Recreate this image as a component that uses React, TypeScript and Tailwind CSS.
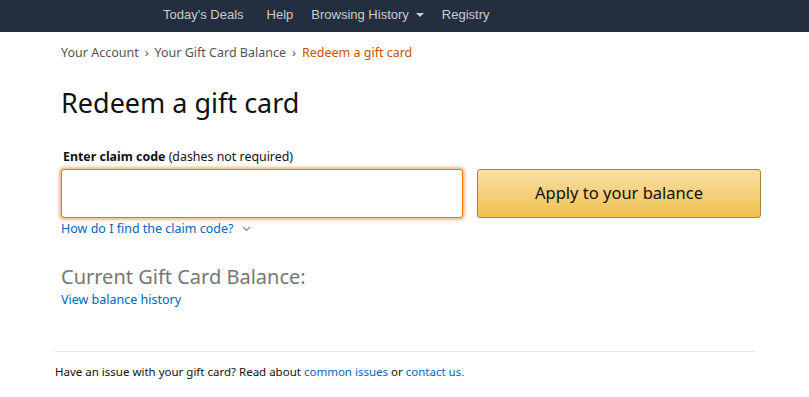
import React from "react";

const navItems = ["Today's Deals", "Help", "Browsing History", "Registry"];

const App = () => {
  return (
    <div className="min-h-[397px] w-[809px] bg-white font-['Noto_Sans',sans-serif] text-[#111]">
      {/* top nav */}
      <div className="flex h-[32px] items-center bg-[#232f3e] pb-[3px] pl-[163px] font-['Liberation_Sans',Arial,sans-serif] text-[13px] text-[#ccc]">
        {navItems.map((item, i) => (
          <div key={item} className={"flex items-center " + (i === 0 ? "mr-[23px]" : "mr-[18px]")}>
            <span>{item}</span>
            {item === "Browsing History" && (
              <span className="ml-[7px] h-0 w-0 border-x-[4px] border-t-[4px] border-x-transparent border-t-[#ccc]" />
            )}
          </div>
        ))}
      </div>

      <div className="ml-[61px] w-[700px]">
        {/* breadcrumb */}
        <div className="mt-[12px] flex items-center text-[12.5px] text-[#555]">
          <span>Your Account</span>
          <span className="mx-[6px]">›</span>
          <span>Your Gift Card Balance</span>
          <span className="mx-[6px]">›</span>
          <span className="text-[#c45500]">Redeem a gift card</span>
        </div>

        <h1 className="mt-[22px] text-[27px] leading-[36px] font-normal">Redeem a gift card</h1>

        <div className="mt-[26px] pl-[2px] text-[12.4px] leading-[19px]">
          <span className="font-bold">Enter claim code</span> (dashes not required)
        </div>

        <div className="mt-[3px] flex gap-[14px]">
          <input
            type="text"
            className="h-[49px] w-[402px] rounded-[3px] border border-[#e77600] bg-white px-3 shadow-[0_0_3px_2px_rgba(228,121,17,0.5)] outline-none"
          />
          <button className="h-[49px] flex-1 rounded-[3px] border border-[#a88734] bg-gradient-to-b from-[#f7dfa5] to-[#f0c14b] text-[16.5px] text-[#111]">
            Apply to your balance
          </button>
        </div>

        <div className="mt-[2px] flex items-center text-[12.5px] text-[#0066c0]">
          <span>How do I find the claim code?</span>
          <svg className="ml-[8px]" width="9" height="6" viewBox="0 0 9 6">
            <path d="M1 1l3.5 3.5L8 1" fill="none" stroke="#888" strokeWidth="1.2" />
          </svg>
        </div>

        <h2 className="mt-[24px] text-[20px] leading-[28px] text-[#767676]">Current Gift Card Balance:</h2>
        <div className="text-[12.5px] text-[#0066c0]">View balance history</div>
      </div>

      <div className="ml-[55px] mt-[42px] w-[700px] border-t border-[#e7e7e7] pt-[11px] text-[11.5px] text-[#111]">
        Have an issue with your gift card? Read about{" "}
        <span className="text-[#0066c0]">common issues</span> or{" "}
        <span className="text-[#0066c0]">contact us.</span>
      </div>
    </div>
  );
};

export default App;
